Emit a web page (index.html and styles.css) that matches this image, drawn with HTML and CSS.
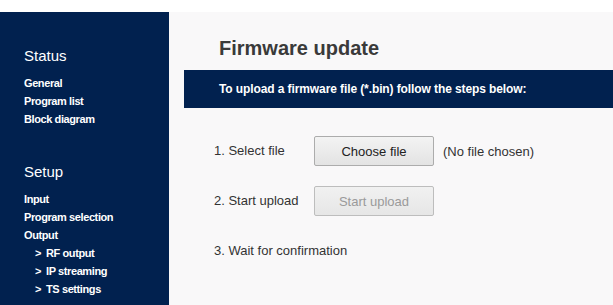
FILE: index.html
```html
<!DOCTYPE html>
<html lang="en">
<head>
<meta charset="utf-8">
<title>Firmware update</title>
<link rel="stylesheet" href="styles.css">
</head>
<body>
<div class="topband"></div>
<div class="layout">
  <nav class="sidebar">
    <div class="group">
      <h2 class="group-title">Status</h2>
      <ul class="menu">
        <li>General</li>
        <li>Program list</li>
        <li>Block diagram</li>
      </ul>
    </div>
    <div class="group">
      <h2 class="group-title">Setup</h2>
      <ul class="menu">
        <li>Input</li>
        <li>Program selection</li>
        <li>Output</li>
        <li class="sub"><span class="arrow">&gt;</span>RF output</li>
        <li class="sub"><span class="arrow">&gt;</span>IP streaming</li>
        <li class="sub"><span class="arrow">&gt;</span>TS settings</li>
      </ul>
    </div>
  </nav>
  <main class="main">
    <h1 class="title">Firmware update</h1>
    <div class="banner">To upload a firmware file (*.bin) follow the steps below:</div>
    <div class="steps">
      <div class="step">
        <span class="step-label">1. Select file</span>
        <button class="btn">Choose file</button>
        <span class="note">(No file chosen)</span>
      </div>
      <div class="step">
        <span class="step-label">2. Start upload</span>
        <button class="btn" disabled>Start upload</button>
      </div>
      <div class="step">
        <span class="step-label wide">3. Wait for confirmation</span>
      </div>
    </div>
  </main>
</div>
</body>
</html>
```

FILE: styles.css
```css
html, body {
  margin: 0;
  padding: 0;
  height: 100%;
  background: #ffffff;
  font-family: "Liberation Sans", Arial, sans-serif;
  overflow: hidden;
}

.topband {
  height: 12px;
  background: #ffffff;
}

.layout {
  display: flex;
  height: calc(100% - 12px);
}

.sidebar {
  width: 169px;
  flex: none;
  background: #01214f;
  color: #ffffff;
  padding: 35px 0 0 24px;
  box-sizing: border-box;
  display: flex;
  flex-direction: column;
  gap: 35px;
}

.group-title {
  margin: 0;
  font-size: 15px;
  font-weight: normal;
  line-height: 18px;
}

.menu {
  list-style: none;
  margin: 9px 0 0 0;
  padding: 0;
}

.menu li {
  font-size: 11px;
  font-weight: bold;
  letter-spacing: -0.4px;
  line-height: 18px;
  height: 18px;
}

.menu li.sub {
  padding-left: 11px;
  display: flex;
}

.arrow {
  width: 11px;
  flex: none;
}

.main {
  flex: 1;
  background: #f9f8f9;
  padding-top: 24px;
}

.title {
  margin: 0 0 0 50px;
  font-size: 20px;
  font-weight: bold;
  color: #3a3a3a;
  line-height: 24px;
  height: 34px;
}

.banner {
  margin-left: 15px;
  height: 38px;
  line-height: 38px;
  background: #01214f;
  color: #ffffff;
  font-size: 12px;
  font-weight: bold;
  letter-spacing: -0.1px;
  padding-left: 35px;
}

.steps {
  padding: 28px 0 0 45px;
  display: flex;
  flex-direction: column;
  gap: 20px;
}

.step {
  display: flex;
  align-items: center;
  height: 30px;
  font-size: 13px;
  color: #333333;
}

.step-label {
  width: 100px;
  flex: none;
  position: relative;
  top: -1px;
}

.step-label.wide {
  width: auto;
}

.btn {
  width: 120px;
  height: 30px;
  padding: 0;
  font-family: "Liberation Sans", Arial, sans-serif;
  font-size: 13px;
  color: #222222;
  background: linear-gradient(#f3f3f3, #e3e3e3);
  border: 1px solid #acacac;
  border-radius: 2px;
}

.btn:disabled {
  color: #9a9a9a;
  background: linear-gradient(#f1f1f1, #e6e6e6);
  border-color: #bdbdbd;
}

.note {
  margin-left: 9px;
}
```
